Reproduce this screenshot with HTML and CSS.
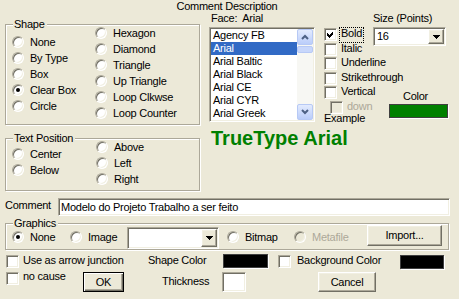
FILE: index.html
```html
<!DOCTYPE html>
<html lang="pt">
<head>
  <meta charset="UTF-8" />
  <title>Comment Description</title>
  <link rel="stylesheet" href="styles.css">
</head>
<body>
<div class="dialog">

  <div class="title">Comment Description</div>

  <div class="main">
    <!-- lado esquerdo: forma e posicao do texto -->
    <div class="left">
      <div class="group shape-group">
        <span class="group-label">Shape</span>
        <div class="col col-a">
          <div class="opt"><span class="radio"></span>None</div>
          <div class="opt"><span class="radio"></span>By Type</div>
          <div class="opt"><span class="radio"></span>Box</div>
          <div class="opt"><span class="radio on"></span>Clear Box</div>
          <div class="opt"><span class="radio"></span>Circle</div>
        </div>
        <div class="col col-b">
          <div class="opt"><span class="radio"></span>Hexagon</div>
          <div class="opt"><span class="radio"></span>Diamond</div>
          <div class="opt"><span class="radio"></span>Triangle</div>
          <div class="opt"><span class="radio"></span>Up Triangle</div>
          <div class="opt"><span class="radio"></span>Loop Clkwse</div>
          <div class="opt"><span class="radio"></span>Loop Counter</div>
        </div>
      </div>

      <div class="group pos-group">
        <span class="group-label">Text Position</span>
        <div class="col col-a">
          <div class="opt"><span class="radio"></span>Center</div>
          <div class="opt"><span class="radio"></span>Below</div>
        </div>
        <div class="col col-b">
          <div class="opt"><span class="radio"></span>Above</div>
          <div class="opt"><span class="radio"></span>Left</div>
          <div class="opt"><span class="radio"></span>Right</div>
        </div>
      </div>
    </div>

    <!-- lado direito: fonte -->
    <div class="right">
      <div class="font-row">
        <div class="face-col">
          <div class="lbl">Face:&nbsp; Arial</div>
          <div class="listbox sunken">
            <ul class="items">
              <li>Agency FB</li>
              <li class="sel">Arial</li>
              <li>Arial Baltic</li>
              <li>Arial Black</li>
              <li>Arial CE</li>
              <li>Arial CYR</li>
              <li>Arial Greek</li>
            </ul>
            <div class="vscroll">
              <div class="sb-btn"><svg width="8" height="6" viewBox="0 0 8 6"><polyline points="1,5 4,2 7,5" /></svg></div>
              <div class="sb-thumb"></div>
              <div class="sb-track"></div>
              <div class="sb-btn"><svg width="8" height="6" viewBox="0 0 8 6"><polyline points="1,1 4,4 7,1" /></svg></div>
            </div>
          </div>
        </div>

        <div class="style-col">
          <div class="chk-row"><span class="check sunken"><svg width="7" height="7" viewBox="0 0 7 7"><path d="M0 2L2 4L6 0V3L2 7L0 5Z" /></svg></span><span class="chk-label focus">Bold</span></div>
          <div class="chk-row"><span class="check sunken"></span><span class="chk-label">Italic</span></div>
          <div class="chk-row"><span class="check sunken"></span><span class="chk-label">Underline</span></div>
          <div class="chk-row"><span class="check sunken"></span><span class="chk-label">Strikethrough</span></div>
          <div class="chk-row"><span class="check sunken"></span><span class="chk-label">Vertical</span></div>
          <div class="chk-row indent disabled"><span class="check sunken"></span><span class="chk-label">down</span></div>
          <div class="example-label">Example</div>
        </div>

        <div class="size-col">
          <div class="lbl">Size (Points)</div>
          <div class="combo size sunken">
            <span class="combo-text">16</span>
            <span class="combo-btn raised"><svg width="7" height="4" viewBox="0 0 7 4"><path d="M0 0H7L3.5 4Z" /></svg></span>
          </div>
          <div class="color-box">
            <div class="lbl">Color</div>
            <div class="swatch green"></div>
          </div>
        </div>
      </div>

      <div class="example-text">TrueType Arial</div>
    </div>
  </div>

  <div class="comment-row">
    <span class="comment-lbl">Comment</span>
    <div class="field sunken">Modelo do Projeto Trabalho a ser feito</div>
  </div>

  <div class="group graphics-group">
    <span class="group-label">Graphics</span>
    <div class="opt g-none"><span class="radio on"></span>None</div>
    <div class="opt g-image"><span class="radio"></span>Image</div>
    <div class="combo pic sunken">
      <span class="combo-text"></span>
      <span class="combo-btn raised"><svg width="7" height="4" viewBox="0 0 7 4"><path d="M0 0H7L3.5 4Z" /></svg></span>
    </div>
    <div class="opt g-bitmap"><span class="radio"></span>Bitmap</div>
    <div class="opt g-meta disabled"><span class="radio"></span>Metafile</div>
    <div class="btn raised import">Import...</div>
  </div>

  <div class="bottom-row row1">
    <div class="cell c-arrow"><span class="check sunken"></span><span class="cell-text">Use as arrow junction</span></div>
    <div class="cell-text c-shape">Shape Color</div>
    <div class="swatch black shape-sw"></div>
    <div class="cell c-bg"><span class="check sunken"></span><span class="cell-text">Background Color</span></div>
    <div class="swatch black bg-sw"></div>
  </div>

  <div class="bottom-row row2">
    <div class="cell c-cause"><span class="check sunken"></span><span class="cell-text">no cause</span></div>
    <div class="btn default ok">OK</div>
    <div class="cell-text c-thick">Thickness</div>
    <div class="thick-box sunken"></div>
    <div class="btn raised cancel">Cancel</div>
  </div>

</div>
</body>
</html>
```

FILE: styles.css
```css
body {
  margin: 0;
  background: #ece9d8;
  font-family: "Liberation Sans", Arial, sans-serif;
  font-size: 11px;
  letter-spacing: -0.25px;
  color: #000;
}

.dialog {
  width: 459px;
  height: 299px;
  overflow: hidden;
}

.title {
  height: 12px;
  line-height: 13px;
  text-align: center;
  padding-right: 5px;
}

/* bordas classicas */
.sunken {
  box-sizing: border-box;
  border: 1px solid;
  border-color: #aca899 #fff #fff #aca899;
  box-shadow: inset 1px 1px #716f64, inset -1px -1px #f1efe2;
  background: #fff;
}

.raised {
  box-sizing: border-box;
  border: 1px solid;
  border-color: #fff #716f64 #716f64 #fff;
  box-shadow: inset -1px -1px #aca899, inset 1px 1px #f1efe2;
  background: #ece9d8;
}

.disabled {
  color: #aca899;
}

.main {
  display: flex;
  height: 186px;
}

.left {
  margin: 12px 0 0 5px;
  width: 195px;
  flex: none;
}

/* group box gravado */
.group {
  position: relative;
  box-sizing: border-box;
  border: 1px solid #aca899;
  box-shadow: inset 1px 1px #fff, 1px 1px #fff;
}

.group-label {
  position: absolute;
  top: -7px;
  left: 7px;
  padding: 0 2px 0 1px;
  line-height: 13px;
  background: #ece9d8;
  white-space: nowrap;
}

.shape-group {
  display: flex;
  height: 101px;
}

.pos-group {
  display: flex;
  margin-top: 13px;
  height: 53px;
}

.col-a {
  margin-left: 6px;
  width: 83px;
  padding-top: 9px;
}

.pos-group .col-a {
  padding-top: 7px;
  width: 84px;
}

.opt {
  display: flex;
  align-items: center;
  height: 16px;
  line-height: 16px;
  white-space: nowrap;
}

.radio {
  flex: none;
  display: flex;
  align-items: center;
  justify-content: center;
  width: 12px;
  height: 12px;
  margin-right: 6px;
  box-sizing: border-box;
  border-radius: 50%;
  border: 1px solid;
  border-color: #aca899 #fff #fff #aca899;
  box-shadow: inset 1px 1px #716f64, inset -1px -1px #f1efe2;
  background: #fff;
}

.radio.on::after {
  content: "";
  width: 4px;
  height: 4px;
  border-radius: 50%;
  background: #000;
}

.disabled .radio {
  background: #ece9d8;
}

/* fonte */
.right {
  margin-left: 9px;
  width: 250px;
}

.font-row {
  display: flex;
  height: 114px;
}

.lbl {
  line-height: 13px;
  white-space: nowrap;
}

.face-col {
  width: 106px;
  flex: none;
}

.face-col .lbl {
  padding-left: 2px;
}

.listbox {
  display: flex;
  margin-top: 2px;
  height: 95px;
  padding: 1px;
}

.items {
  flex: 1;
  margin: 0;
  padding: 0;
  list-style: none;
  overflow: hidden;
}

.items li {
  line-height: 13px;
  padding-left: 2px;
  white-space: nowrap;
}

.items li.sel {
  background: #316ac5;
  color: #fff;
}

.vscroll {
  width: 16px;
  display: flex;
  flex-direction: column;
  background: #f7f7f3;
}

.sb-btn {
  height: 16px;
  display: flex;
  align-items: center;
  justify-content: center;
  box-sizing: border-box;
  border: 1px solid #b7c9f5;
  border-radius: 2px;
  background: linear-gradient(#e3ebfe, #bacdfa);
}

.sb-btn polyline {
  fill: none;
  stroke: #4d6185;
  stroke-width: 2;
}

.sb-thumb {
  height: 7px;
  margin-top: 1px;
  box-sizing: border-box;
  border: 1px solid #b7c9f5;
  border-radius: 2px;
  background: #c8d7fb;
}

.sb-track {
  flex: 1;
}

.style-col {
  flex: none;
  width: 49px;
  margin: 16px 0 0 9px;
}

.chk-row {
  display: flex;
  height: 14.5px;
  white-space: nowrap;
}

.chk-row.indent {
  padding-left: 6px;
}

.check {
  flex: none;
  display: flex;
  align-items: center;
  justify-content: center;
  width: 13px;
  height: 13px;
}

.check svg {
  shape-rendering: crispEdges;
}

.disabled .check {
  background: #ece9d8;
}

.chk-label {
  margin: -1px 0 0 2px;
  padding: 0 1px;
  line-height: 11px;
  border: 1px dotted transparent;
}

.chk-label.focus {
  border-color: #000;
}

.example-label {
  margin-top: -2px;
  line-height: 11px;
}

.size-col {
  flex: none;
  width: 80px;
}

.combo {
  display: flex;
  padding: 1px;
}

.combo.size {
  margin-top: 2px;
  width: 73px;
  height: 19px;
}

.combo-text {
  flex: 1;
  padding-left: 2px;
  line-height: 15px;
}

.combo-btn {
  width: 16px;
  display: flex;
  align-items: center;
  justify-content: center;
}

.combo-btn svg {
  shape-rendering: crispEdges;
}

.color-box {
  width: 60px;
  margin: 44px 0 0 16px;
}

.color-box .lbl {
  text-align: center;
  padding-right: 7px;
}

.swatch {
  box-sizing: border-box;
  border: 1px solid #404040;
  box-shadow: 1px 1px #fff;
}

.swatch.green {
  margin-top: 1px;
  width: 59px;
  height: 14px;
  background: #008000;
}

.swatch.black {
  background: #000;
  height: 14px;
}

.example-text {
  padding-left: 2px;
  font-size: 20px;
  line-height: 24px;
  font-weight: bold;
  color: #008000;
  letter-spacing: 0;
}

/* comentario */
.comment-row {
  display: flex;
  margin-left: 5px;
  height: 18px;
}

.comment-lbl {
  width: 53px;
  margin-top: 1px;
  line-height: 13px;
}

.field {
  width: 392px;
  height: 18px;
  padding: 0 2px;
  line-height: 16px;
  white-space: nowrap;
}

/* graficos */
.graphics-group {
  display: flex;
  align-items: center;
  margin: 7px 0 0 5px;
  width: 444px;
  height: 27px;
}

.g-none {
  margin-left: 6px;
  width: 58px;
}

.g-image {
  width: 57px;
}

.combo.pic {
  width: 92px;
  height: 22px;
  margin-top: 2px;
}

.g-bitmap {
  margin-left: 8px;
  width: 67px;
}

.g-meta {
  width: 73px;
}

.btn {
  display: flex;
  align-items: center;
  justify-content: center;
  line-height: 11px;
  box-sizing: border-box;
}

.btn.import {
  width: 75px;
  height: 21px;
  margin-top: -2px;
}

.btn.default {
  border: 1px solid #000;
  box-shadow: inset 1px 1px #fff, inset -1px -1px #716f64, inset -2px -2px #aca899;
}

/* linhas de baixo */
.bottom-row {
  display: flex;
  align-items: flex-start;
}

.row1 {
  margin-top: 4px;
  height: 15px;
}

.row2 {
  margin-top: 3px;
}

.cell {
  display: flex;
  white-space: nowrap;
}

.cell-text {
  line-height: 11px;
  white-space: nowrap;
}

.c-arrow {
  margin-left: 6px;
  width: 142px;
}

.c-arrow .check,
.c-bg .check {
  margin-top: 1px;
}

.c-arrow .cell-text,
.c-bg .cell-text {
  margin-top: 1px;
}

.c-arrow .cell-text,
.c-cause .cell-text {
  margin-left: 4px;
}

.c-shape {
  width: 75px;
  margin-top: 1px;
}

.shape-sw {
  width: 45px;
}

.c-bg {
  margin-left: 10px;
  width: 122px;
}

.c-bg .cell-text {
  margin-left: 6px;
}

.bg-sw {
  width: 44px;
  margin-top: 1px;
}

.c-cause {
  margin-left: 6px;
  width: 77px;
}

.c-cause .cell-text {
  margin-top: -1px;
}

.ok {
  width: 41px;
  height: 20px;
}

.c-thick {
  margin: 4px 0 0 38px;
  width: 60px;
}

.thick-box {
  width: 24px;
  height: 20px;
}

.cancel {
  margin-left: 72px;
  width: 58px;
  height: 20px;
}
```
